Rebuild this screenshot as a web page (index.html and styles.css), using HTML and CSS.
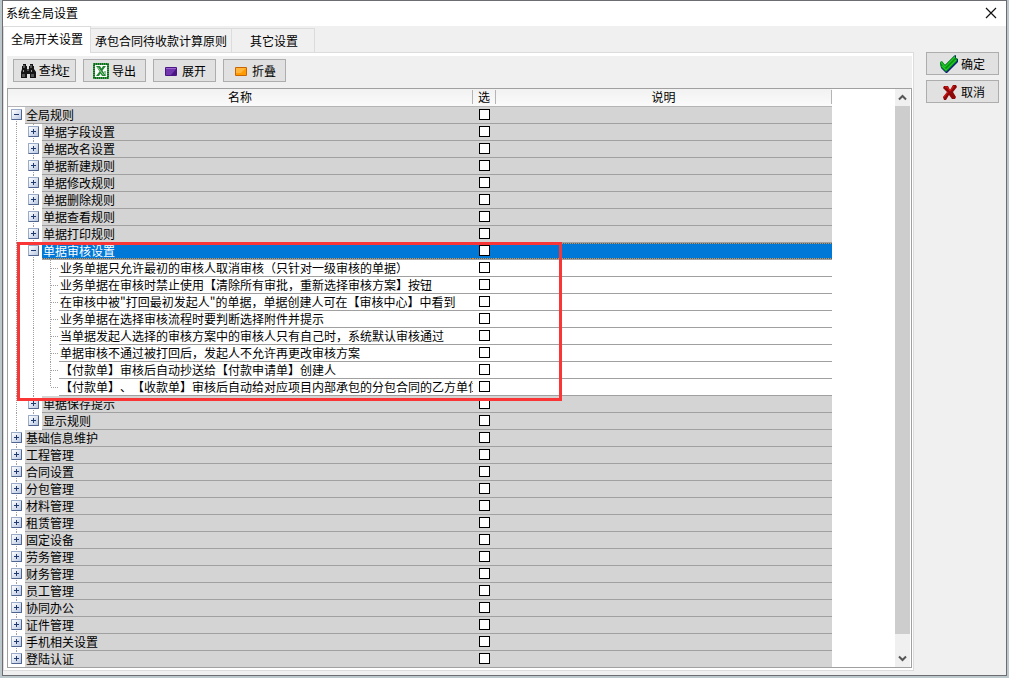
FILE: index.html
```html
<!DOCTYPE html>
<html lang="zh-CN">
<head>
<meta charset="utf-8">
<title>系统全局设置</title>
<link rel="stylesheet" href="styles.css">
</head>
<body>
<div class="window">
  <header class="titlebar">
    <h1 class="title">系统全局设置</h1>
    <button class="close" aria-label="关闭"><svg width="12" height="12" viewBox="0 0 12 12"><path d="M1 1L11 11M11 1L1 11" stroke="#111" stroke-width="1.2" fill="none"/></svg></button>
  </header>
  <div class="body">
    <main class="main">
      <div class="tabs" role="tablist">
        <button class="tab active" role="tab" aria-selected="true">全局开关设置</button>
        <button class="tab" role="tab">承包合同待收款计算原则</button>
        <button class="tab wide" role="tab">其它设置</button>
      </div>
      <section class="panel">
        <div class="toolbar">
          <button class="btn"><svg class="icon" viewBox="0 0 16 16"><path d="M3 1h3v2h1v3h2V3h1V1h3v2h1v3l2 3v6h-6v-4H7v4H1V9l1-3V3h1z" fill="#151515"/><path d="M4 2v3M11 2v3M3.500 7v2M11.500 7v2" stroke="#999"/><path d="M2 11h3v3H2zM11 11h3v3h-3zM7 6h2v2H7z" fill="#555"/></svg><span>查找<u>F</u></span></button>
          <button class="btn"><svg class="icon" viewBox="0 0 16 16"><path d="M0 0h16v16H0z" fill="#3f9a48"/><path d="M1 1h14v14H1z" fill="none" stroke="#0c6a1c" stroke-width="2" stroke-dasharray="1 1"/><path d="M2 2h12v12H2z" fill="#fff"/><path d="M3 3h4l1.500 2.500L10 3h3l-3.500 4.500L13 13H9L7.500 10.500 6 13H3l3.500-4.500z" fill="#238734"/><path d="M4.500 4L10.500 12" stroke="#9bd29c"/><path d="M11 9h2M12 11h1" stroke="#238734"/></svg><span>导出</span></button>
          <button class="btn"><svg class="icon" viewBox="0 0 16 16"><rect x="2" y="4" width="12" height="9" rx="1" fill="#4b1585"/><path d="M3 5h10v1L8 12H3z" fill="#7136ad"/><path d="M3 5.500h10" stroke="#9a66cf"/></svg><span>展开</span></button>
          <button class="btn"><svg class="icon" viewBox="0 0 16 16"><rect x="2" y="4" width="12" height="9" rx="1" fill="#c96500"/><path d="M3 5h10v7H3z" fill="#ff9a00"/><path d="M3 5h10L8 10H3z" fill="#ffb63a"/></svg><span>折叠</span></button>
        </div>
        <div class="grid">
          <table class="tree">
            <colgroup><col class="c-name"><col class="c-check"><col></colgroup>
            <thead><tr><th><span>名称</span></th><th><span>选</span></th><th><span>说明</span></th></tr></thead>
            <tbody>
              <tr class="first"><td><div class="node"><i class="knob"><button class="toggle open" aria-label="折叠"></button></i><label for="r1">全局规则</label></div></td><td><input type="checkbox" id="r1"></td><td></td></tr>
              <tr><td><div class="node"><i class="guide"></i><i class="knob"><button class="toggle" aria-label="展开"></button></i><label for="r2">单据字段设置</label></div></td><td><input type="checkbox" id="r2"></td><td></td></tr>
              <tr><td><div class="node"><i class="guide"></i><i class="knob"><button class="toggle" aria-label="展开"></button></i><label for="r3">单据改名设置</label></div></td><td><input type="checkbox" id="r3"></td><td></td></tr>
              <tr><td><div class="node"><i class="guide"></i><i class="knob"><button class="toggle" aria-label="展开"></button></i><label for="r4">单据新建规则</label></div></td><td><input type="checkbox" id="r4"></td><td></td></tr>
              <tr><td><div class="node"><i class="guide"></i><i class="knob"><button class="toggle" aria-label="展开"></button></i><label for="r5">单据修改规则</label></div></td><td><input type="checkbox" id="r5"></td><td></td></tr>
              <tr><td><div class="node"><i class="guide"></i><i class="knob"><button class="toggle" aria-label="展开"></button></i><label for="r6">单据删除规则</label></div></td><td><input type="checkbox" id="r6"></td><td></td></tr>
              <tr><td><div class="node"><i class="guide"></i><i class="knob"><button class="toggle" aria-label="展开"></button></i><label for="r7">单据查看规则</label></div></td><td><input type="checkbox" id="r7"></td><td></td></tr>
              <tr><td><div class="node"><i class="guide"></i><i class="knob"><button class="toggle" aria-label="展开"></button></i><label for="r8">单据打印规则</label></div></td><td><input type="checkbox" id="r8"></td><td></td></tr>
              <tr class="selected"><td><div class="node"><i class="guide"></i><i class="knob"><button class="toggle open" aria-label="折叠"></button></i><label for="r9">单据审核设置</label></div></td><td><input type="checkbox" id="r9"></td><td></td></tr>
              <tr class="leaf"><td><div class="node"><i class="guide"></i><i class="guide"></i><i class="guide branch"></i><label for="r10">业务单据只允许最初的审核人取消审核（只针对一级审核的单据）</label></div></td><td><input type="checkbox" id="r10"></td><td></td></tr>
              <tr class="leaf"><td><div class="node"><i class="guide"></i><i class="guide"></i><i class="guide branch"></i><label for="r11">业务单据在审核时禁止使用【清除所有审批，重新选择审核方案】按钮</label></div></td><td><input type="checkbox" id="r11"></td><td></td></tr>
              <tr class="leaf"><td><div class="node"><i class="guide"></i><i class="guide"></i><i class="guide branch"></i><label for="r12">在审核中被"打回最初发起人"的单据，单据创建人可在【审核中心】中看到</label></div></td><td><input type="checkbox" id="r12"></td><td></td></tr>
              <tr class="leaf"><td><div class="node"><i class="guide"></i><i class="guide"></i><i class="guide branch"></i><label for="r13">业务单据在选择审核流程时要判断选择附件并提示</label></div></td><td><input type="checkbox" id="r13"></td><td></td></tr>
              <tr class="leaf"><td><div class="node"><i class="guide"></i><i class="guide"></i><i class="guide branch"></i><label for="r14">当单据发起人选择的审核方案中的审核人只有自己时，系统默认审核通过</label></div></td><td><input type="checkbox" id="r14"></td><td></td></tr>
              <tr class="leaf"><td><div class="node"><i class="guide"></i><i class="guide"></i><i class="guide branch"></i><label for="r15">单据审核不通过被打回后，发起人不允许再更改审核方案</label></div></td><td><input type="checkbox" id="r15"></td><td></td></tr>
              <tr class="leaf"><td><div class="node"><i class="guide"></i><i class="guide"></i><i class="guide branch"></i><label for="r16">【付款单】审核后自动抄送给【付款申请单】创建人</label></div></td><td><input type="checkbox" id="r16"></td><td></td></tr>
              <tr class="leaf"><td><div class="node"><i class="guide"></i><i class="guide"></i><i class="guide branch end"></i><label for="r17">【付款单】、【收款单】审核后自动给对应项目内部承包的分包合同的乙方单位</label></div></td><td><input type="checkbox" id="r17"></td><td></td></tr>
              <tr><td><div class="node"><i class="guide"></i><i class="knob"><button class="toggle" aria-label="展开"></button></i><label for="r18">单据保存提示</label></div></td><td><input type="checkbox" id="r18"></td><td></td></tr>
              <tr><td><div class="node"><i class="guide"></i><i class="knob end"><button class="toggle" aria-label="展开"></button></i><label for="r19">显示规则</label></div></td><td><input type="checkbox" id="r19"></td><td></td></tr>
              <tr><td><div class="node"><i class="knob"><button class="toggle" aria-label="展开"></button></i><label for="r20">基础信息维护</label></div></td><td><input type="checkbox" id="r20"></td><td></td></tr>
              <tr><td><div class="node"><i class="knob"><button class="toggle" aria-label="展开"></button></i><label for="r21">工程管理</label></div></td><td><input type="checkbox" id="r21"></td><td></td></tr>
              <tr><td><div class="node"><i class="knob"><button class="toggle" aria-label="展开"></button></i><label for="r22">合同设置</label></div></td><td><input type="checkbox" id="r22"></td><td></td></tr>
              <tr><td><div class="node"><i class="knob"><button class="toggle" aria-label="展开"></button></i><label for="r23">分包管理</label></div></td><td><input type="checkbox" id="r23"></td><td></td></tr>
              <tr><td><div class="node"><i class="knob"><button class="toggle" aria-label="展开"></button></i><label for="r24">材料管理</label></div></td><td><input type="checkbox" id="r24"></td><td></td></tr>
              <tr><td><div class="node"><i class="knob"><button class="toggle" aria-label="展开"></button></i><label for="r25">租赁管理</label></div></td><td><input type="checkbox" id="r25"></td><td></td></tr>
              <tr><td><div class="node"><i class="knob"><button class="toggle" aria-label="展开"></button></i><label for="r26">固定设备</label></div></td><td><input type="checkbox" id="r26"></td><td></td></tr>
              <tr><td><div class="node"><i class="knob"><button class="toggle" aria-label="展开"></button></i><label for="r27">劳务管理</label></div></td><td><input type="checkbox" id="r27"></td><td></td></tr>
              <tr><td><div class="node"><i class="knob"><button class="toggle" aria-label="展开"></button></i><label for="r28">财务管理</label></div></td><td><input type="checkbox" id="r28"></td><td></td></tr>
              <tr><td><div class="node"><i class="knob"><button class="toggle" aria-label="展开"></button></i><label for="r29">员工管理</label></div></td><td><input type="checkbox" id="r29"></td><td></td></tr>
              <tr><td><div class="node"><i class="knob"><button class="toggle" aria-label="展开"></button></i><label for="r30">协同办公</label></div></td><td><input type="checkbox" id="r30"></td><td></td></tr>
              <tr><td><div class="node"><i class="knob"><button class="toggle" aria-label="展开"></button></i><label for="r31">证件管理</label></div></td><td><input type="checkbox" id="r31"></td><td></td></tr>
              <tr><td><div class="node"><i class="knob"><button class="toggle" aria-label="展开"></button></i><label for="r32">手机相关设置</label></div></td><td><input type="checkbox" id="r32"></td><td></td></tr>
              <tr class="last"><td><div class="node"><i class="knob end"><button class="toggle" aria-label="展开"></button></i><label for="r33">登陆认证</label></div></td><td><input type="checkbox" id="r33"></td><td></td></tr>
            </tbody>
          </table>
          <div class="scrollbar">
            <button class="arrow" aria-label="向上滚动"><svg width="9" height="7" viewBox="0 0 9 7"><path d="M1 5.500L4.500 2L8 5.500" fill="none" stroke="#555" stroke-width="2"/></svg></button>
            <div class="thumb"></div>
            <button class="arrow" aria-label="向下滚动"><svg width="9" height="7" viewBox="0 0 9 7"><path d="M1 1.500L4.500 5L8 1.500" fill="none" stroke="#555" stroke-width="2"/></svg></button>
          </div>
          <div class="highlight"></div>
        </div>
      </section>
    </main>
    <aside class="actions">
      <button class="btn"><svg class="icon big" viewBox="0 0 18 18"><path d="M0 8l2-1 3 3L14 1l2-1v3l2 1v3L7 18H6L1 13z" fill="#0a1f7c"/><path d="M0 7l2-1 3 4L14 1l1-1v3l2 0v3L6 17 1 12z" fill="#0a8f10"/><path d="M1 7.500L5 12 15 2M2 11l4 4L16 5" fill="none" stroke="#22c928" stroke-width="1.200"/></svg><span>确定</span></button>
      <button class="btn"><svg class="icon big" viewBox="0 0 18 18"><path d="M4 3h4l2 4 3-5h3l1 2-4 5 3 5-1 2h-3l-3-4-3 5H4l-1-3 4-5-4-4z" fill="#8f0808"/><path d="M5 4h2l3 4M14 3l-4 5M8 9l-4 5" fill="none" stroke="#d81818" stroke-width="1.200"/></svg><span>取消</span></button>
    </aside>
  </div>
</div>
</body>
</html>
```
FILE: styles.css
```css
* { box-sizing: border-box; }
body {
  margin: 0;
  padding: 0 2px 2px;
  background: #bcc8cc;
  color: #000;
  font: 12px/16px "Noto Sans CJK SC", sans-serif;
  text-spacing-trim: space-all;
}
button { font: inherit; color: inherit; padding: 0; margin: 0; border: 0; background: none; white-space: nowrap; }
svg { display: block; }

.window {
  display: flex;
  flex-direction: column;
  min-height: calc(100vh - 2px);
  background: #f0f0f0;
  border: 1px solid #6b6d71;
}
.titlebar {
  display: flex;
  align-items: center;
  justify-content: space-between;
  height: 25px;
  padding: 0 9px 2px 3px;
  background: #fff;
}
.title { margin: 0; font-size: 12px; font-weight: 400; }
.body { display: flex; flex: 1; padding-right: 7px; }
.main { flex: 1; min-width: 0; }

.tabs { display: flex; align-items: flex-end; height: 26px; }
.tab {
  height: 24px;
  padding: 0 4px;
  border: 1px solid #dcdcdc;
  border-width: 1px 1px 0 0;
}
.tab.wide { padding: 0 16px 0 18px; }
.tab.active {
  height: 27px;
  margin-bottom: -1px;
  padding: 0 7px 2px;
  border-left-width: 1px;
  background: #fff;
  position: relative;
}

.panel { padding: 3px 1px 2px 3px; border: 1px solid #dcdcdc; background: #fff; }
.toolbar { display: flex; gap: 7px; padding: 3px 6px 6px; background: #f0f0f0; }
.btn {
  display: flex;
  align-items: center;
  justify-content: center;
  gap: 3px;
  width: 63px;
  height: 23px;
  border: 1px solid #adadad;
  background: #e1e1e1;
}
.btn u { font-family: "Liberation Serif", serif; font-size: 12px; }
.icon { width: 16px; height: 16px; flex: none; }
.icon.big { width: 18px; height: 18px; }
.actions {
  display: flex;
  flex-direction: column;
  gap: 5px;
  margin-left: 12px;
  padding-top: 26px;
}
.actions .btn { width: 73px; }

.grid {
  position: relative;
  display: flex;
  gap: 63px;
  border: 1px solid #a0a0a0;
  padding-right: 1px;
  background: #fff;
}
.tree { flex: 1; width: 100%; table-layout: fixed; border-collapse: separate; border-spacing: 0; }
.c-name { width: 465px; }
.c-check { width: 23px; }
th {
  height: 18px;
  padding: 0 0 1px;
  font-weight: 400;
  background: linear-gradient(#f2f2f2, #fafafa);
  border-bottom: 1px solid #b4b4b4;
}
th span { display: block; height: 14px; line-height: 14px; border-right: 1px solid #b4b4b4; }
td { height: 17px; padding: 0; background: #d4d4d4; border-bottom: 1px solid #a0a0a0; }
td:first-child { background: #fff; border-bottom: 0; }
td:nth-child(2) { vertical-align: top; }
.leaf td { background: #fff; }
.last td { height: 16px; border-bottom: 0; }

.node { display: flex; height: 17px; }
.node label {
  flex: 1;
  min-width: 0;
  padding-left: 1px;
  overflow: hidden;
  white-space: nowrap;
  background: #d4d4d4;
  border-bottom: 1px solid #a0a0a0;
}
.leaf .node label { background: #fff; }
.last .node { height: 16px; }
.last .node label { border-bottom: 0; }
.selected .node label,
.selected td:not(:first-child) {
  color: #fff;
  background:
    repeating-linear-gradient(90deg, #f08a24 0 1px, #0078d7 1px 2px) left bottom / 100% 1px no-repeat,
    repeating-linear-gradient(90deg, #f08a24 0 1px, #0078d7 1px 2px) left top / 100% 1px no-repeat,
    #0078d7;
  background-origin: padding-box;
  background-clip: padding-box;
}

/* dotted connectors: each indent step is one 17px column */
.guide, .knob {
  flex: none;
  width: 17px;
  background: repeating-linear-gradient(#a0a0a0 0 1px, #fff 1px 2px) 8px 0 / 1px 100% no-repeat;
}
.branch {
  background:
    repeating-linear-gradient(#a0a0a0 0 1px, #fff 1px 2px) 8px 0 / 1px 100% no-repeat,
    repeating-linear-gradient(90deg, #a0a0a0 0 1px, #fff 1px 2px) 9px 8px / 8px 1px no-repeat;
}
.guide.end { background-size: 1px 8px, 8px 1px; }
.knob.end { background-size: 1px 8px; }
.first .knob { background-position: 8px 8px; }
.knob { display: flex; padding: 2px 3px; }
.toggle {
  width: 11px;
  height: 11px;
  border: 1px solid #6f83a6;
  border-color: #9aabc8 #4f658f #4f658f #9aabc8;
  border-radius: 1px;
  background:
    linear-gradient(#1f3a6e, #1f3a6e) center / 5px 1px no-repeat,
    linear-gradient(#1f3a6e, #1f3a6e) center / 1px 5px no-repeat,
    linear-gradient(135deg, #fff, #b9c8e2);
}
.toggle.open {
  background:
    linear-gradient(#1f3a6e, #1f3a6e) center / 5px 1px no-repeat,
    linear-gradient(135deg, #fff, #b9c8e2);
}
input[type="checkbox"] {
  appearance: none;
  display: block;
  width: 11px;
  height: 11px;
  margin: 2px auto 0;
  border: 1px solid #000;
  background: #fff;
}

.scrollbar { display: flex; flex-direction: column; flex: none; width: 15px; background: #f0f0f0; }
.arrow { display: flex; align-items: center; justify-content: center; height: 17px; }
.thumb { flex: 1; margin-bottom: 16px; background: #cdcdcd; }

/* annotation frame laid over the expanded group */
.highlight {
  position: absolute;
  left: 9px;
  top: 153px;
  width: 545px;
  height: 159px;
  border: 3px solid #fa3535;
  pointer-events: none;
}
```
